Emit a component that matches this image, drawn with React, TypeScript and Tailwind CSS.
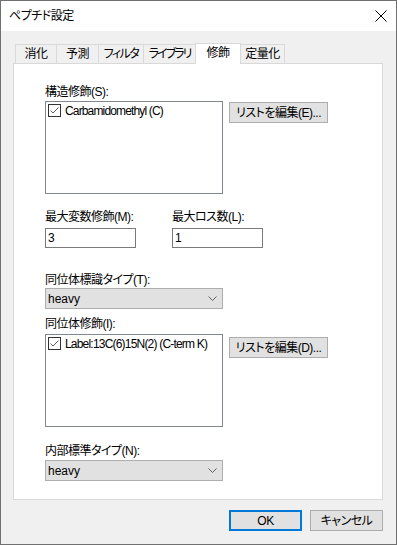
import React from "react";

const Check = () => (
  <div className="w-[13px] h-[13px] border border-[#333333] bg-white flex items-center justify-center shrink-0">
    <svg width="11" height="11" viewBox="0 0 11 11">
      <polyline points="1.5,5.5 4,8 9.5,2.5" fill="none" stroke="#5a5a5a" strokeWidth="1" />
    </svg>
  </div>
);

const Chevron = () => (
  <svg width="9" height="5" viewBox="0 0 9 5">
    <polyline points="0.5,0.5 4.5,4.5 8.5,0.5" fill="none" stroke="#606060" strokeWidth="1" />
  </svg>
);

const Tab = ({ label, w, selected, tight }: { label: string; w: number; selected?: boolean; tight?: string }) => (
  <div
    style={{ width: w }}
    className={
      selected
        ? "h-[21px] -mb-px -ml-px relative z-10 bg-white border border-b-0 border-[#d9d9d9] flex items-center justify-center pb-[2px] whitespace-nowrap"
        : "h-[19px] -ml-px bg-[#f0f0f0] border border-b-0 border-[#d9d9d9] flex items-center justify-center whitespace-nowrap"
    }
  >
    <span className={"leading-[16px] " + (tight ?? "")}>{label}</span>
  </div>
);

const Combo = ({ value }: { value: string }) => (
  <div className="w-[178px] h-[21px] bg-[#e1e1e1] border border-[#adadad] flex items-center justify-between pl-[2px] pr-[5px]">
    <span className="leading-[16px] tracking-normal">{value}</span>
    <Chevron />
  </div>
);

const Btn = ({ children, w, primary }: { children: React.ReactNode; w: number; primary?: boolean }) => (
  <div
    style={{ width: w }}
    className={
      primary
        ? "h-[21px] bg-[#e1e1e1] border-2 border-[#0078d7] flex items-center justify-center whitespace-nowrap"
        : "h-[21px] bg-[#e1e1e1] border border-[#adadad] flex items-center justify-center whitespace-nowrap"
    }
  >
    <span className="leading-[16px]">{children}</span>
  </div>
);

export default function App() {
  return (
    <div className="w-[397px] h-[545px] border border-[#707070] bg-[#f0f0f0] flex flex-col text-[12px] text-black font-['Liberation_Sans','Noto_Sans_CJK_JP',sans-serif] [font-feature-settings:'palt'] whitespace-nowrap tracking-[-0.5px]">
      <div className="h-[30px] bg-white flex items-center justify-between pl-[8px] pr-[9px] shrink-0">
        <span className="leading-[16px]">ペプチド設定</span>
        <svg width="12" height="12" viewBox="0 0 12 12">
          <line x1="0.5" y1="0.5" x2="11.5" y2="11.5" stroke="#000" strokeWidth="1" />
          <line x1="11.5" y1="0.5" x2="0.5" y2="11.5" stroke="#000" strokeWidth="1" />
        </svg>
      </div>

      <div className="mt-[12px] ml-[15px] flex items-end h-[20px] shrink-0">
        <Tab label="消化" w={42} />
        <Tab label="予測" w={43} />
        <Tab label="フィルタ" w={46} tight="tracking-[-1.5px]" />
        <Tab label="ライブラリ" w={53} tight="tracking-[-2px]" />
        <Tab label="修飾" w={46} selected />
        <Tab label="定量化" w={45} />
      </div>

      <div className="ml-[12px] w-[370px] h-[437px] bg-white border border-[#d9d9d9] pl-[31px] flex flex-col shrink-0">
        <div className="mt-[20px] leading-[16px] h-[16px]">構造修飾(S):</div>
        <div className="mt-px flex items-start">
          <div className="w-[178px] h-[93px] border border-[#828790] bg-white pl-[2px] pt-[2px]">
            <div className="flex items-center gap-[4px] h-[13px]">
              <Check />
              <span className="leading-[16px] tracking-[-0.85px]">Carbamidomethyl (C)</span>
            </div>
          </div>
          <div className="ml-[6px] mt-px">
            <Btn w={99}>リストを編集(E)...</Btn>
          </div>
        </div>

        <div className="mt-[15px] flex leading-[16px] h-[16px]">
          <div className="w-[127px]">最大変数修飾(M):</div>
          <div>最大ロス数(L):</div>
        </div>
        <div className="mt-[3px] flex">
          <div className="w-[91px] h-[20px] border border-[#7a7a7a] bg-white pl-[2px] flex items-center">
            <span className="leading-[16px]">3</span>
          </div>
          <div className="ml-[36px] w-[91px] h-[20px] border border-[#7a7a7a] bg-white pl-[2px] flex items-center">
            <span className="leading-[16px]">1</span>
          </div>
        </div>

        <div className="mt-[24px] leading-[16px] h-[16px]">同位体標識タイプ(T):</div>
        <div className="mt-0">
          <Combo value="heavy" />
        </div>

        <div className="mt-[7px] leading-[16px] h-[16px]">同位体修飾(I):</div>
        <div className="mt-[2px] flex items-start">
          <div className="w-[178px] h-[93px] border border-[#828790] bg-white pl-[2px] pt-[2px]">
            <div className="flex items-center gap-[4px] h-[13px]">
              <Check />
              <span className="leading-[16px] tracking-[-0.8px]">Label:13C(6)15N(2) (C-term K)</span>
            </div>
          </div>
          <div className="ml-[6px] mt-[3px]">
            <Btn w={99}>リストを編集(D)...</Btn>
          </div>
        </div>

        <div className="mt-[16px] leading-[16px] h-[16px]">内部標準タイプ(N):</div>
        <div className="mt-px">
          <Combo value="heavy" />
        </div>
      </div>

      <div className="mt-[10px] mr-[13px] flex justify-end gap-[8px] shrink-0">
        <Btn w={73} primary>OK</Btn>
        <Btn w={73}>キャンセル</Btn>
      </div>
    </div>
  );
}
